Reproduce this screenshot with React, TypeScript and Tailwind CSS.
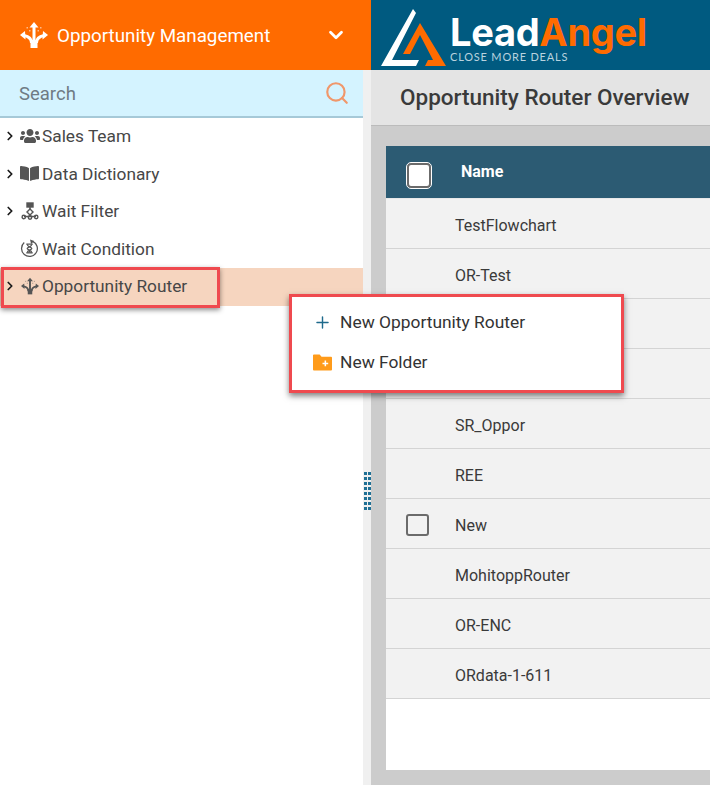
import { ChevronDown, ChevronRight, Plus, Search } from 'lucide-react';
import { FaBookOpen, FaUsers } from 'react-icons/fa';

const rows = ['TestFlowchart', 'OR-Test', '', '', 'SR_Oppor', 'REE', 'New', 'MohitoppRouter', 'OR-ENC', 'ORdata-1-611'];

function RouterIcon({ className }: { className?: string }) {
    return (
        <svg viewBox="0 0 28 28" className={className} fill="currentColor">
            <rect x="10.5" y="19" width="7" height="8" />
            <rect x="12.5" y="5" width="3" height="15" />
            <polygon points="14,1 18.5,6.5 9.5,6.5" />
            <path d="M11.5 22C11.5 18 9 15.5 4 14.5" fill="none" stroke="currentColor" strokeWidth="3" />
            <path d="M16.5 22C16.5 18 19 15.5 24 14.5" fill="none" stroke="currentColor" strokeWidth="3" />
            <polygon points="0,14 5,10 5.5,18.5" />
            <polygon points="28,14 23,10 22.5,18.5" />
            <g opacity="0.55">
                <rect x="6.5" y="6" width="1.5" height="1.5" />
                <rect x="9" y="9" width="1.5" height="1.5" />
                <rect x="20" y="6" width="1.5" height="1.5" />
                <rect x="17.5" y="9" width="1.5" height="1.5" />
            </g>
        </svg>
    );
}

function FlowIcon({ className }: { className?: string }) {
    return (
        <svg viewBox="0 0 18 18" className={className} fill="none" stroke="currentColor" strokeWidth="1.4">
            <rect x="6" y="1" width="6" height="4" fill="currentColor" />
            <path d="M9 5v2" />
            <polygon points="9,7 12,10 9,13 6,10" />
            <path d="M9 13v1.5M3 14.5h12" />
            <circle cx="2.8" cy="15" r="1.7" />
            <circle cx="9" cy="15.5" r="1.7" />
            <circle cx="15.2" cy="15" r="1.7" />
        </svg>
    );
}

function WaitIcon({ className }: { className?: string }) {
    return (
        <svg viewBox="0 0 18 18" className={className} fill="none" stroke="currentColor" strokeWidth="1.2">
            <path d="M12 2.2A7.5 7.5 0 1 1 4 3.4" />
            <polygon points="9.5,0.5 13.5,2 10.5,4.8" fill="currentColor" stroke="none" />
            <path d="M6 4.8h6M6 13.2h6" />
            <path d="M6.8 5c0 2.6 4.4 2.6 4.4 4s-4.4 1.4-4.4 4M11.2 5c0 2.6-4.4 2.6-4.4 4s4.4 1.4 4.4 4" />
            <polygon points="7.2,12.8 10.8,12.8 9,10.8" fill="currentColor" stroke="none" />
        </svg>
    );
}

function TreeRow({ label, icon, arrow = true, active = false }: { label: string; icon: React.ReactNode; arrow?: boolean; active?: boolean }) {
    return (
        <div className={`h-[37.5px] flex items-center pl-[5px] pt-[1px] text-[17.3px] text-[#474747] whitespace-nowrap ${active ? 'bg-[#f6d5bf]' : ''}`}>
            <span className="w-[12px] flex justify-start shrink-0">
                {arrow && <ChevronRight className="w-[14px] h-[14px] text-[#1a1a1a] -ml-[2px] -mt-[2px]" strokeWidth={3} />}
            </span>
            <span className="w-[25px] flex items-center justify-center text-[#555] shrink-0 -mt-[3px]">{icon}</span>
            <span>{label}</span>
        </div>
    );
}

export default function App() {
    return (
        <div className="relative w-[710px] h-[785px] overflow-hidden bg-white font-[Roboto,sans-serif]">
            {/* 상단 바 */}
            <div className="flex h-[70px]">
                <div className="w-[371px] bg-[#ff6b00] flex items-center pl-[20px] text-white">
                    <RouterIcon className="w-[28px] h-[28px]" />
                    <span className="ml-[9px] mt-[3px] text-[18.8px] flex-1 whitespace-nowrap">Opportunity Management</span>
                    <ChevronDown className="w-[22px] h-[22px] mr-[24px]" strokeWidth={3} />
                </div>
                <div className="flex-1 bg-[#005a80] flex items-center pl-[9px]">
                    <svg viewBox="380 2 68 60" className="w-[68px] h-[60px] shrink-0 mt-[3px]">
                        <polygon points="413,4 416,8 392,55 419,55 416,61 381,61" fill="#fff" />
                        <polygon points="420,18 446,61 425,61 428,55 433,55 420,30 410,49 403,49" fill="#ff6b00" />
                    </svg>
                    <div className="ml-[2px] mt-[7px]">
                        <div className="text-[38px] leading-[36px] font-[Inter,sans-serif] font-bold tracking-[-0.3px] whitespace-nowrap">
                            <span className="text-white">Lead</span>
                            <span className="text-[#ff6b00]">Angel</span>
                        </div>
                        <div className="text-[11px] leading-[13px] tracking-[0.8px] text-[#b9d3df] font-[Lato,sans-serif] whitespace-nowrap">CLOSE MORE DEALS</div>
                    </div>
                </div>
            </div>

            <div className="flex h-[715px]">
                {/* 사이드바 */}
                <div className="w-[363px] bg-white shrink-0">
                    <div className="h-[48px] bg-[#d4f3ff] border-b-2 border-[#a6c9d8] flex items-center pl-[19px] pr-[13px]">
                        <input placeholder="Search" className="flex-1 bg-transparent mt-[3px] text-[18.5px] outline-none placeholder:text-[#6f7b84]" />
                        <Search className="w-[26px] h-[26px] text-[#f0976b]" strokeWidth={2} />
                    </div>
                    <TreeRow label="Sales Team" icon={<FaUsers className="w-[20px] h-[20px]" />} />
                    <TreeRow label="Data Dictionary" icon={<FaBookOpen className="w-[19px] h-[19px]" />} />
                    <TreeRow label="Wait Filter" icon={<FlowIcon className="w-[18px] h-[18px]" />} />
                    <TreeRow label="Wait Condition" arrow={false} icon={<WaitIcon className="w-[19px] h-[19px]" />} />
                    <TreeRow label="Opportunity Router" active icon={<RouterIcon className="w-[18px] h-[18px]" />} />
                </div>

                {/* 스플리터 */}
                <div className="w-[8px] bg-[#f0f0f0] shrink-0 pt-[402px] flex justify-center">
                    <div className="grid grid-cols-2 gap-x-px gap-y-[2px] h-[38px]">
                        {Array.from({ length: 16 }).map((_, i) => (
                            <span key={i} className="w-[3px] h-[3px] bg-[#1f6f94]" />
                        ))}
                    </div>
                </div>

                {/* 메인 */}
                <div className="flex-1 min-w-0 bg-[#cccccc] flex flex-col">
                    <div className="h-[56px] shrink-0 bg-[#e4e4e4] border-b border-[#bbbbbb] flex items-center pl-[29px] text-[22.5px] font-medium text-[#3a3a3a] whitespace-nowrap">
                        Opportunity Router Overview
                    </div>
                    <div className="pl-[15px] pt-[20px]">
                        <div className="bg-white h-[624px]">
                            <div className="h-[53px] bg-[#2c5b73] border-b border-[#e8e8e8] flex items-center pl-[21px]">
                                <span className="w-[24px] h-[25px] mt-[7px] rounded-[4px] bg-white border-[2px] border-[#6b6b6b] outline outline-1 outline-white" />
                                <span className="ml-[30px] text-white text-[16px] font-bold">Name</span>
                            </div>
                            {rows.map((name, i) => (
                                <div key={i} className="h-[50px] bg-[#f2f2f2] border-b border-[#d4d4d4] flex items-center pl-[20px] pt-[4px] text-[16px] text-[#3a3a3a]">
                                    <span className="w-[23px] flex -mt-[2px]">
                                        {name === 'New' && <span className="w-[23px] h-[22px] rounded-[3px] border-2 border-[#6b6b6b]" />}
                                    </span>
                                    <span className="ml-[26px]">{name}</span>
                                </div>
                            ))}
                        </div>
                    </div>
                </div>
            </div>

            {/* 강조 표시 */}
            <div className="absolute left-[1px] top-[267px] w-[219px] h-[41px] border-[3px] border-[#ef4a4f] shadow-[0_2px_5px_rgba(0,0,0,0.45)]" />

            {/* 컨텍스트 메뉴 */}
            <div className="absolute left-[289px] top-[294px] w-[335px] h-[99px] bg-white border-[3px] border-[#ef4a4f] shadow-[0_3px_6px_rgba(0,0,0,0.5)] text-[17.4px] text-[#333]">
                <div className="h-[40px] mt-[5px] flex items-center pl-[21px]">
                    <Plus className="w-[19px] h-[19px] text-[#1f6a8c]" strokeWidth={1.8} />
                    <span className="ml-[8px]">New Opportunity Router</span>
                </div>
                <div className="h-[40px] flex items-center pl-[21px]">
                    <svg viewBox="0 0 20 18" className="w-[19px] h-[18px]">
                        <path d="M0 2a1 1 0 0 1 1-1h6l2 2.5h10a1 1 0 0 1 1 1V17a1 1 0 0 1-1 1H1a1 1 0 0 1-1-1z" fill="#ff9b1a" />
                        <path d="M13 7.5v6M10 10.5h6" stroke="#fff" strokeWidth="1.6" />
                    </svg>
                    <span className="ml-[8px]">New Folder</span>
                </div>
            </div>
        </div>
    );
}
